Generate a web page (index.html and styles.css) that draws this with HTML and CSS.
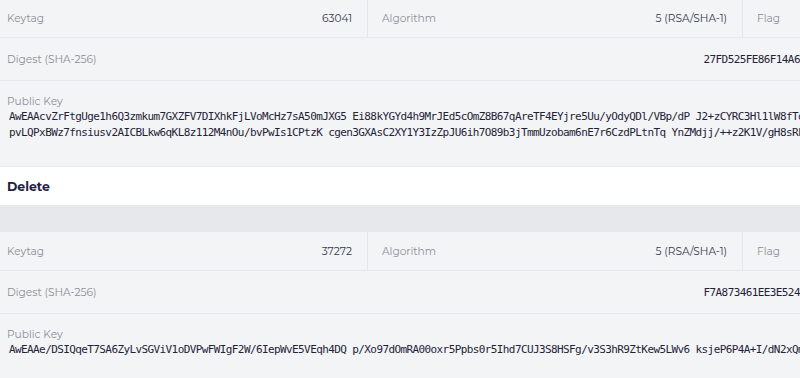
FILE: index.html
```html
<!DOCTYPE html>
<html lang="en">
<head>
<meta charset="UTF-8">
<title>DNSSEC keys</title>
<link rel="stylesheet" href="styles.css">
</head>
<body>

<div class="key-list">

  <div class="key-card first">
    <div class="meta">
      <div class="cell"><span class="label">Keytag</span><span class="value">63041</span></div>
      <div class="cell"><span class="label">Algorithm</span><span class="value">5 (RSA/SHA-1)</span></div>
      <div class="cell"><span class="label">Flag</span><span class="value">257 (KSK)</span></div>
    </div>
    <div class="row digest">
      <span class="label">Digest (SHA-256)</span>
      <span class="mono">27FD525FE86F14A6C3D9B2E1F07A85C4D6E3B9F2A1C8D70E5B4A3F26C91D8E07</span>
    </div>
    <div class="row pubkey">
      <span class="label">Public Key</span>
      <p class="mono">AwEAAcvZrFtgUge1h6Q3zmkum7GXZFV7DIXhkFjLVoMcHz7sA50mJXG5 Ei88kYGYd4h9MrJEd5cOmZ8B67qAreTF4EYjre5Uu/yOdyQDl/VBp/dP J2+zCYRC3Hl1lW8fTqPcX0nB4hKs2Gd9vLmYjR5eNa7uQwZxE1bIoF3t pvLQPxBWz7fnsiusv2AICBLkw6qKL8z112M4nOu/bvPwIs1CPtzK cgen3GXAsC2XY1Y3IzZpJU6ih7O89b3jTmmUzobam6nE7r6CzdPLtnTq YnZMdjj/++z2K1V/gH8sRk3mWqE0yTnB5cLa9fXd2PjUoZv4Mi7Ge1Hb</p>
    </div>
    <div class="actions"><button class="delete">Delete</button></div>
  </div>

  <div class="key-card">
    <div class="meta">
      <div class="cell"><span class="label">Keytag</span><span class="value">37272</span></div>
      <div class="cell"><span class="label">Algorithm</span><span class="value">5 (RSA/SHA-1)</span></div>
      <div class="cell"><span class="label">Flag</span><span class="value">257 (KSK)</span></div>
    </div>
    <div class="row digest">
      <span class="label">Digest (SHA-256)</span>
      <span class="mono">F7A873461EE3E524B9D1C06F8A2E35B7D4C9E10A6F3B82D57C1E94A0B6D3F28E</span>
    </div>
    <div class="row pubkey">
      <span class="label">Public Key</span>
      <p class="mono">AwEAAe/DSIQqeT7SA6ZyLvSGViV1oDVPwFWIgF2W/6IepWvE5VEqh4DQ p/Xo97dOmRA00oxr5Ppbs0r5Ihd7CUJ3S8HSFg/v3S3hR9ZtKew5LWv6 ksjeP6P4A+I/dN2xQm8LrT0cYb3Fh7UaKo1VgJ5sEw9ZnPi4Bd6Ty2Hl</p>
    </div>
    <div class="actions"><button class="delete">Delete</button></div>
  </div>

</div>

</body>
</html>
```

FILE: styles.css
```css
body {
  margin: 0;
  font-family: "Montserrat", "Noto Sans", Arial, sans-serif;
  background: #e6e8eb;
  overflow: hidden;
}
.key-list {
  width: 1110px;
  display: flex; flex-direction: column;
  gap: 27px;
}
.key-card.first { margin-top: -1px; }
.key-card { background: #f3f4f6; }
.meta {
  display: grid;
  grid-template-columns: 368px 375px 1fr;
  height: 38px;
  border-bottom: 1px solid #e8e9ed;
}
.cell {
  display: flex; justify-content: space-between; align-items: center;
  padding: 0 15px 0 7px;
  border-right: 1px solid #e5e6ea;
}
.cell + .cell { padding-left: 14px; }
.cell:last-child { border-right: none; }
.label {
  font-size: 10.6px;
  color: #8c8f97;
}
.value {
  font-size: 10.6px;
  color: #363a52;
}
.row {
  padding: 0 7px;
  border-bottom: 1px solid #e8e9ed;
}
.digest {
  height: 42px;
  display: flex; justify-content: space-between; align-items: center;
}
.mono {
  font-family: "DejaVu Sans Mono", monospace;
  font-size: 11px;
  letter-spacing: -0.6px;
  color: #1f2338;
}
.digest .mono { margin-right: 14px; }
.pubkey {
  padding-top: 13px;
  padding-bottom: 25px;
  padding-left: 9px;
}
.pubkey .label {
  display: block;
  margin-left: -2px;
  line-height: 15px;
}
.pubkey p {
  margin: 0;
  line-height: 16px;
  width: 1060px;
}
.actions {
  background: #fff;
  height: 38px;
  display: flex; align-items: center;
  padding: 0 7px;
}
.delete {
  font-family: inherit;
  font-size: 12.5px;
  font-weight: 700;
  color: #1e2140;
  background: none; border: none; padding: 0;
  cursor: pointer;
}
```
